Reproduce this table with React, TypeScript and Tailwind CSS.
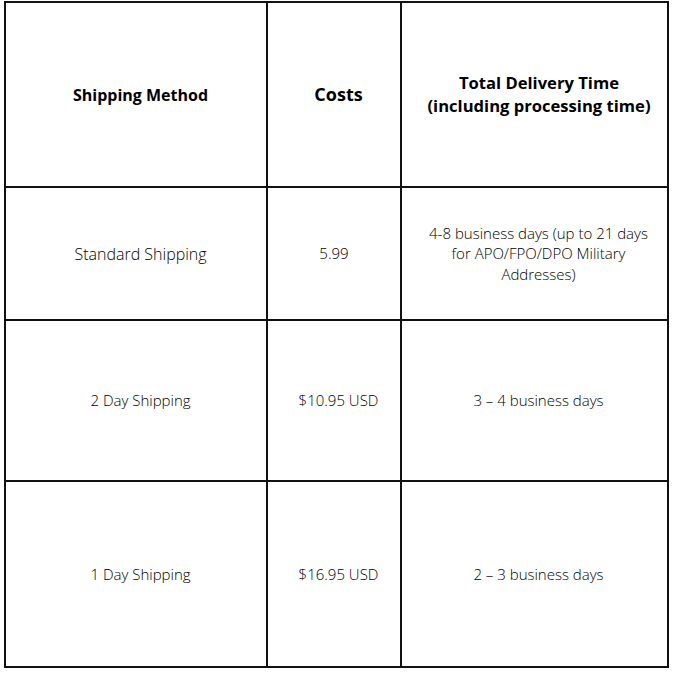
import React from 'react';

const rows = [
  { method: 'Standard Shipping', cost: '5.99', time: '4-8 business days (up to 21 days for APO/FPO/DPO Military Addresses)', h: 'h-[131px]', mSize: 'text-[16px]', cPad: 'pl-[6px] pr-[6px]' },
  { method: '2 Day Shipping', cost: '$10.95 USD', time: '3 – 4 business days', h: 'h-[159px]', mSize: 'text-[15px]', cPad: 'pl-[15px] pr-[6px]' },
  { method: '1 Day Shipping', cost: '$16.95 USD', time: '2 – 3 business days', h: 'h-[184px]', mSize: 'text-[15px]', cPad: 'pl-[15px] pr-[6px]' },
];

const cell = 'bg-white flex items-center justify-center text-center';

const App: React.FC = () => {
  return (
    <div className="w-[674px] h-[674px] bg-white pl-[4px] pt-[1px]" style={{ fontFamily: '"Open Sans", sans-serif' }}>
      <div className="w-[665px] grid grid-cols-[260px_132px_265px] gap-[2px] p-[2px] bg-[#111]">
        <div className={`${cell} pl-[15px] pr-[6px] h-[183px] text-[16px] font-bold text-black`}>Shipping Method</div>
        <div className={`${cell} pl-[15px] pr-[6px] h-[183px] text-[18px] font-bold text-black`}>Costs</div>
        <div className={`${cell} pl-[15px] pr-[6px] h-[183px] text-[16.6px] leading-[23px] font-bold text-black pb-[2px]`}>
          Total Delivery Time
          <br />
          (including processing time)
        </div>

        {rows.map((r) => (
          <React.Fragment key={r.method}>
            <div className={`${cell} pl-[15px] pr-[6px] ${r.h} ${r.mSize} font-light text-black`}>{r.method}</div>
            <div className={`${cell} ${r.cPad} ${r.h} text-[15px] font-light text-black`}>{r.cost}</div>
            <div className={`${cell} ${r.h} text-[15px] leading-[20.5px] font-light text-black pl-[22px] pr-[14px]`}>{r.time}</div>
          </React.Fragment>
        ))}
      </div>
    </div>
  );
};

export default App;
